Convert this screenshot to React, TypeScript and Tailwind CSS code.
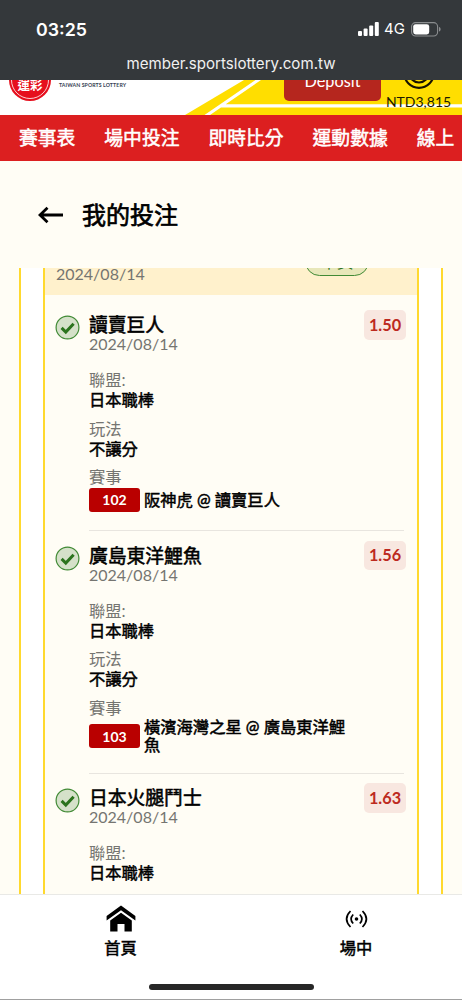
import { clsx } from "clsx"

type Bet = {
	team: string;
	date: string;
	odds: string;
	league: string;
	play: string;
	code?: string;
	match?: string;
}

const bets: Bet[] = [
	{ team: "讀賣巨人", date: "2024/08/14", odds: "1.50", league: "日本職棒", play: "不讓分", code: "102", match: "阪神虎 @ 讀賣巨人" },
	{ team: "廣島東洋鯉魚", date: "2024/08/14", odds: "1.56", league: "日本職棒", play: "不讓分", code: "103", match: "橫濱海灣之星 @ 廣島東洋鯉魚" },
	{ team: "日本火腿鬥士", date: "2024/08/14", odds: "1.63", league: "日本職棒", play: "" },
]

const navItems = ["賽事表", "場中投注", "即時比分", "運動數據", "線上"]

function BrowserBar() {
	return (
		<div className="flex h-20 shrink-0 flex-col bg-[#34383b] font-['Inter',sans-serif] text-white">
			<div className="flex h-[52px] items-end justify-between pr-[21px] pl-9">
				<p className="mb-[11px] text-[17.8px] leading-[22px] font-semibold">03:25</p>
				<div className="mb-[15px] flex items-center">
					<svg width="21" height="14" viewBox="0 0 21 14" fill="#fff">
						<rect x="0" y="9" width="4" height="5" rx="1" />
						<rect x="5.6" y="6.5" width="4" height="7.5" rx="1" />
						<rect x="11.2" y="3.5" width="4" height="10.5" rx="1" />
						<rect x="16.8" y="0" width="4" height="14" rx="1" />
					</svg>
					<span className="ml-[5px] w-[21px] text-[15px] leading-4">4G</span>
					<svg className="ml-[6px]" width="30" height="15" viewBox="0 0 30 15">
						<rect x="0.6" y="0.6" width="26" height="13.4" rx="4" fill="none" stroke="#8b8e90" strokeWidth="1.1" />
						<rect x="2.2" y="2.2" width="16" height="10.2" rx="2.4" fill="#fff" />
						<path d="M28 5v4.6c1-.3 1.6-1.2 1.6-2.3S29 5.3 28 5z" fill="#8b8e90" />
					</svg>
				</div>
			</div>
			<p className="text-center text-[15.1px] leading-6 text-[#f0f0f0]">member.sportslottery.com.tw</p>
		</div>
	)
}

function SiteHeader() {
	return (
		<header className="relative flex h-[35px] shrink-0 items-end overflow-hidden bg-white">
			<svg className="absolute inset-0" width="462" height="35" viewBox="0 0 462 35">
				<path d="M185 35L244 0H462V35z" fill="#ffde00" />
				<path d="M204.5 35L255.5 0h5.5L210 35zM225 24.300H462v3.200H219z" fill="#fff" />
			</svg>
			<div className="relative mb-[14px] ml-[9px] flex size-[42px] shrink-0 items-end justify-center rounded-full bg-[#e60f1d] p-[2px]">
				<div className="flex size-full items-end justify-center rounded-full border border-white/80 pb-[5px]">
					<span className="text-[12.5px] leading-[14px] font-bold whitespace-nowrap text-white">運彩</span>
				</div>
			</div>
			<div className="relative mb-[27px] ml-[5px] w-[74px] border-t border-gray-400 pt-[2px] pl-[3px] text-[5.2px] leading-[6px] font-bold tracking-[0.1px] whitespace-nowrap text-gray-700">
				TAIWAN SPORTS LOTTERY
			</div>
			<div className="relative mb-[14px] ml-[154px] flex h-10 w-[97px] shrink-0 items-end justify-center rounded-[5px] bg-[#b5261e] pb-[10px] text-[16.3px] leading-5 text-white">
				Deposit
			</div>
			<div className="relative ml-[5px] flex w-[65px] flex-col items-center">
				<svg width="32" height="32" viewBox="0 0 32 32" fill="none" stroke="#161200" strokeWidth="2.2">
					<circle cx="16" cy="16" r="14.8" />
					<circle cx="16" cy="16" r="9.5" />
					<path d="M11 17c1 3 9 3 10 0" />
				</svg>
				<p className="mt-[4px] mb-[5px] text-[14px] leading-[17px] text-[#1c1a00]">NTD3,815</p>
			</div>
		</header>
	)
}

function CheckBadge() {
	return (
		<svg className="mt-[5px] shrink-0" width="25" height="25" viewBox="0 0 25 25">
			<circle cx="12.5" cy="12.5" r="11.4" fill="#d5e1c9" stroke="#418a35" strokeWidth="1.2" />
			<path d="M6.6 12.900l4.200 4.200 7.800-8.300" fill="none" stroke="#2b731d" strokeWidth="3" />
		</svg>
	)
}

function Field({ label, value }: { label: string; value: string }) {
	return (
		<div className="mb-[8.5px] text-[16.3px] leading-5">
			<p className="text-[#757571]">{label}</p>
			<p className="text-black [-webkit-text-stroke:0.5px]">{value}</p>
		</div>
	)
}

function BetItem({ bet, first }: { bet: Bet; first: boolean }) {
	return (
		<li className={clsx("flex pr-[11px] pl-[10px]", first ? "pt-[15px]" : "pt-[9.5px]")}>
			<CheckBadge />
			<div className="ml-[9px] flex-1">
				<div className="flex h-[60px] justify-between">
					<div className="pt-[5px]">
						<h3 className="text-[18.8px] leading-5 text-black [-webkit-text-stroke:0.55px]">{bet.team}</h3>
						<p className="text-[16px] leading-[18px] text-[#757571]">{bet.date}</p>
					</div>
					<span className="flex h-[29.5px] w-[42px] items-center justify-center rounded-[5px] bg-[#f8e7e0] text-[16.3px] font-bold text-[#bd2a20]">{bet.odds}</span>
				</div>
				<Field label="聯盟:" value={bet.league} />
				<Field label="玩法" value={bet.play} />
				{bet.code && (
					<>
						<p className="text-[16.3px] leading-5 text-[#757571]">賽事</p>
						<div className="mr-[2px] flex items-center border-b border-[#e8e5df] pt-[0.5px] pb-[18.5px]">
							<span className="flex h-6 w-[51px] shrink-0 items-center justify-center rounded-[3px] bg-[#b90000] text-[14px] font-bold text-white">{bet.code}</span>
							<p className="ml-[4px] w-[210px] text-[16.3px] leading-[18px] text-black [-webkit-text-stroke:0.5px]">{bet.match}</p>
						</div>
					</>
				)}
			</div>
		</li>
	)
}

function BetList() {
	return (
		<div className="mx-[19px] flex min-h-0 flex-1 items-start overflow-hidden border-x-2 border-[#ffd92e] bg-white px-[22px]">
			<div className="h-[640px] flex-1 border-x-2 border-[#ffd92e] bg-[#fffdf5]">
				<div className="flex h-[27px] items-end justify-between bg-[#fff1cc] pr-[48px] pl-[11px]">
					<p className="mb-[11px] text-[16px] leading-5 text-[#757571]">2024/08/14</p>
					<span className="mb-[19px] flex h-[29px] w-[64px] items-center justify-center rounded-full border border-[#418a35] bg-[#e8e7b9] text-[16px] leading-5 text-[#2b731d]">中獎</span>
				</div>
				<ul>
					{bets.map((bet, i) => (
						<BetItem key={bet.team} bet={bet} first={i === 0} />
					))}
				</ul>
			</div>
		</div>
	)
}

function TabBar() {
	return (
		<div className="flex h-[106px] shrink-0 flex-col items-center border-t border-b border-t-[#e9e9e6] border-b-[#a0a0a0] bg-white">
			<div className="flex h-[89px] w-full text-[16.3px] leading-5 text-black [-webkit-text-stroke:0.5px]">
				<div className="flex w-[241px] shrink-0 flex-col items-center pt-[10px]">
					<svg width="30" height="27" viewBox="0 0 30 27" fill="#000">
						<path d="M15 0.6L29.4 11v4.6L15 5.3 0.6 15.6V11z" />
						<path d="M15 7.8l10.8 7.8v10.8h-7.3v-7.3h-7v7.3H4.2V15.6z" />
					</svg>
					<span className="mt-[6px]">首頁</span>
				</div>
				<div className="flex w-[230px] shrink-0 flex-col items-center pt-[15px]">
					<svg width="23" height="18" viewBox="0 0 22 18" fill="none" stroke="#000" strokeWidth="1.7">
						<path d="M5 1Q-2.8 9 5 17M17 1q7.8 8 0 16M7.7 4.5q-4.2 4.5 0 9M14.3 4.5q4.2 4.5 0 9" />
						<circle cx="11" cy="9" r="1.8" fill="#000" stroke="none" />
					</svg>
					<span className="mt-[10px]">場中</span>
				</div>
			</div>
			<div className="h-[6px] w-[165px] rounded-full bg-[#272727]" />
		</div>
	)
}

export default function App() {
	return (
		<div className="flex h-[1000px] w-[462px] flex-col overflow-hidden bg-[#fffdf5] font-['Lato','Noto_Sans_CJK_TC',sans-serif]">
			<BrowserBar />
			<SiteHeader />
			<nav className="flex h-[46px] shrink-0 items-center gap-[29px] overflow-hidden bg-[#dc1f20] pl-[19px] text-[18.8px] whitespace-nowrap text-white [-webkit-text-stroke:0.5px]">
				{navItems.map((item) => (
					<a key={item}>{item}</a>
				))}
			</nav>
			<div className="flex h-[107px] shrink-0 items-center pl-[38px]">
				<svg width="25" height="20" viewBox="0 0 25 20" fill="none" stroke="#000" strokeWidth="2.8">
					<path d="M25 10H2M9.5 2.8L2 10l7.5 7.2" />
				</svg>
				<h1 className="ml-[19px] text-[24px] text-black [-webkit-text-stroke:0.7px]">我的投注</h1>
			</div>
			<BetList />
			<TabBar />
		</div>
	)
}
